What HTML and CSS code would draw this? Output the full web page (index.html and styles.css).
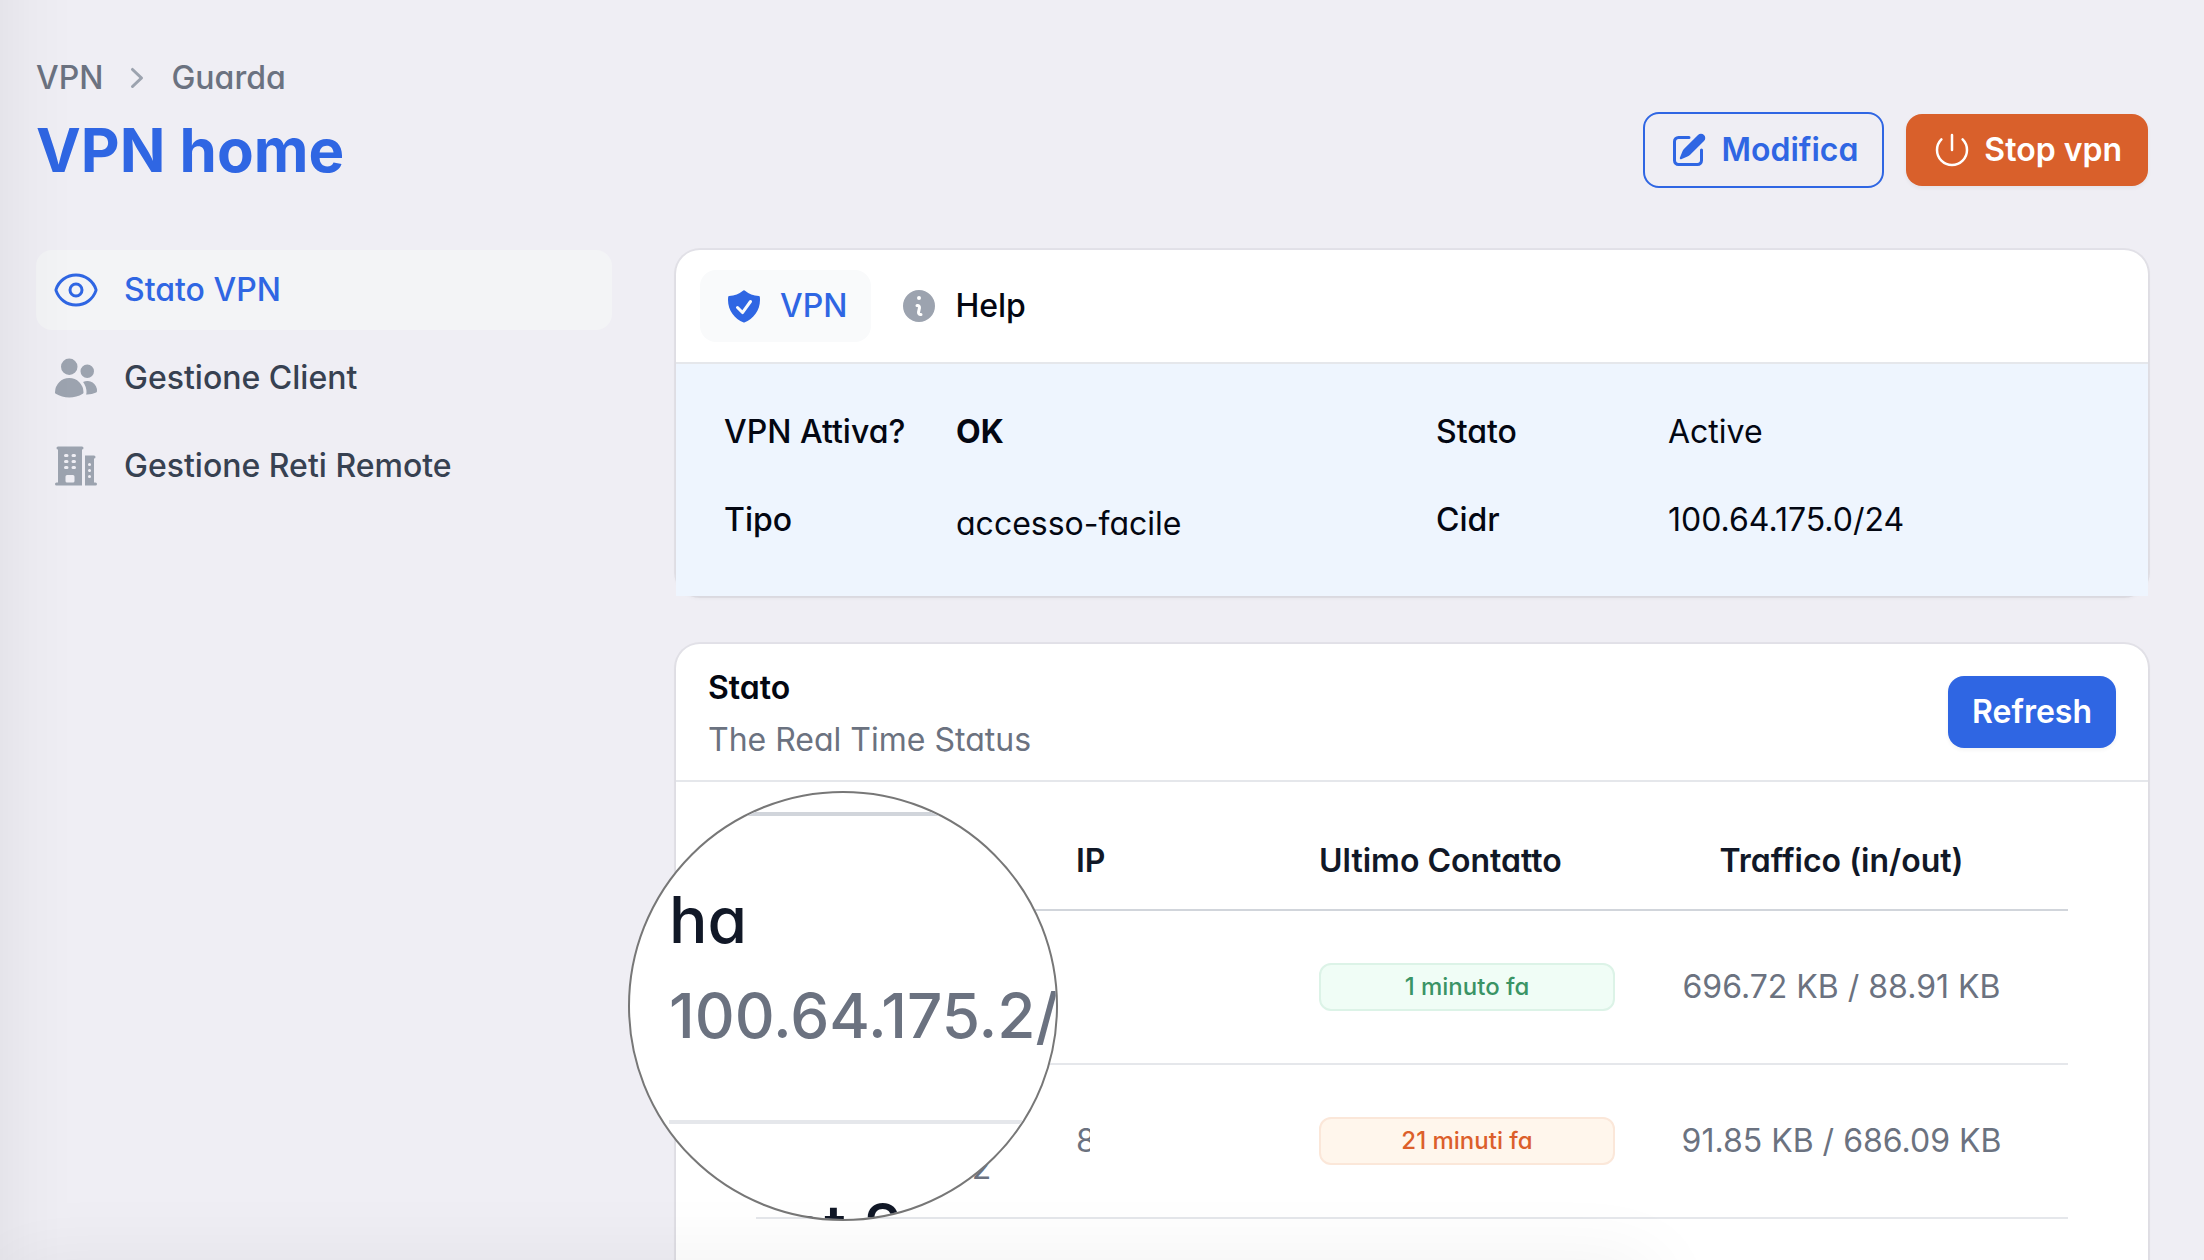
FILE: index.html
```html
<!DOCTYPE html>
<html lang="it">
<head>
<meta charset="utf-8">
<meta name="viewport" content="width=device-width, initial-scale=1">
<title>VPN home</title>
<link rel="stylesheet" href="styles.css">
</head>
<body>
<div class="page">
  <header class="page-header">
    <nav class="breadcrumb" aria-label="Breadcrumb">
      <a href="#vpn">VPN</a>
      <svg class="icon" viewBox="0 0 20 20" fill="currentColor" aria-hidden="true"><path fill-rule="evenodd" d="M7.21 14.77a.75.75 0 01.02-1.06L11.168 10 7.23 6.29a.75.75 0 111.04-1.08l4.5 4.25a.75.75 0 010 1.08l-4.5 4.25a.75.75 0 01-1.06-.02z"/></svg>
      <a href="#guarda">Guarda</a>
    </nav>
    <div class="title-row">
      <h1>VPN home</h1>
      <div class="actions">
        <button type="button" class="btn btn-outline">
          <svg class="icon" viewBox="0 0 20 20" fill="currentColor" aria-hidden="true"><path d="M5.433 13.917l1.262-3.155A4 4 0 017.58 9.42l6.92-6.918a2.121 2.121 0 013 3l-6.92 6.918c-.383.383-.84.685-1.343.886l-3.154 1.262a.5.5 0 01-.65-.65z"/><path d="M3.5 5.75c0-.69.56-1.25 1.25-1.25H10A.75.75 0 0010 3H4.75A2.75 2.75 0 002 5.75v9.5A2.75 2.75 0 004.75 18h9.5A2.75 2.75 0 0017 15.25V10a.75.75 0 00-1.5 0v5.25c0 .69-.56 1.25-1.25 1.25h-9.5c-.69 0-1.25-.56-1.25-1.25v-9.5z"/></svg>
          <span>Modifica</span>
        </button>
        <button type="button" class="btn btn-danger">
          <svg class="icon" viewBox="0 0 24 24" fill="none" stroke="currentColor" stroke-width="1.5" stroke-linecap="round" stroke-linejoin="round" aria-hidden="true"><path d="M5.636 5.636a9 9 0 1012.728 0M12 3v9"/></svg>
          <span>Stop vpn</span>
        </button>
      </div>
    </div>
  </header>

  <div class="layout">
    <nav class="sidebar" aria-label="Sezioni">
      <a class="side-link is-active" href="#stato">
        <svg class="icon-lg" viewBox="0 0 24 24" fill="none" stroke="currentColor" stroke-width="1.5" stroke-linecap="round" stroke-linejoin="round" aria-hidden="true"><path d="M2.036 12.322a1.012 1.012 0 010-.639C3.423 7.51 7.36 4.5 12 4.5c4.638 0 8.573 3.007 9.963 7.178.07.207.07.431 0 .639C20.577 16.49 16.64 19.5 12 19.5c-4.638 0-8.573-3.007-9.963-7.178z"/><path d="M15 12a3 3 0 11-6 0 3 3 0 016 0z"/></svg>
        <span>Stato VPN</span>
      </a>
      <a class="side-link" href="#client">
        <svg class="icon-lg" viewBox="0 0 24 24" fill="currentColor" aria-hidden="true"><path d="M4.5 6.375a4.125 4.125 0 118.25 0 4.125 4.125 0 01-8.25 0zM14.25 8.625a3.375 3.375 0 116.75 0 3.375 3.375 0 01-6.75 0zM1.5 19.125a7.125 7.125 0 0114.25 0v.003l-.001.119a.75.75 0 01-.363.63 13.067 13.067 0 01-6.761 1.873c-2.472 0-4.786-.684-6.76-1.873a.75.75 0 01-.364-.63l-.001-.122zM17.25 19.128l-.001.144a2.25 2.25 0 01-.233.96 10.088 10.088 0 005.06-1.01.75.75 0 00.42-.643 4.875 4.875 0 00-6.957-4.611 8.586 8.586 0 011.71 5.157v.003z"/></svg>
        <span>Gestione Client</span>
      </a>
      <a class="side-link" href="#reti">
        <svg class="icon-lg" viewBox="0 0 24 24" fill="currentColor" aria-hidden="true"><path fill-rule="evenodd" d="M3 2.25a.75.75 0 000 1.5v16.5h-.75a.75.75 0 000 1.5H15v-18a.75.75 0 000-1.5H3zM6.75 19.5v-2.25a.75.75 0 01.75-.75h3a.75.75 0 01.75.75v2.25a.75.75 0 01-.75.75h-3a.75.75 0 01-.75-.75zM6 6.75A.75.75 0 016.75 6h.75a.75.75 0 010 1.5h-.75A.75.75 0 016 6.75zM6.75 9a.75.75 0 000 1.5h.75a.75.75 0 000-1.5h-.75zM6 12.75a.75.75 0 01.75-.75h.75a.75.75 0 010 1.5h-.75a.75.75 0 01-.75-.75zM10.5 6a.75.75 0 000 1.5h.75a.75.75 0 000-1.5h-.75zm-.75 3.75A.75.75 0 0110.5 9h.75a.75.75 0 010 1.5h-.75a.75.75 0 01-.75-.75zM10.5 12a.75.75 0 000 1.5h.75a.75.75 0 000-1.5h-.75zM16.5 6.75v15h5.25a.75.75 0 000-1.5H21v-12a.75.75 0 000-1.5h-4.5zm1.5 4.5a.75.75 0 01.75-.75h.008a.75.75 0 01.75.75v.008a.75.75 0 01-.75.75h-.008a.75.75 0 01-.75-.75v-.008zm.75 2.25a.75.75 0 00-.75.75v.008c0 .414.336.75.75.75h.008a.75.75 0 00.75-.75v-.008a.75.75 0 00-.75-.75h-.008zM18 17.25a.75.75 0 01.75-.75h.008a.75.75 0 01.75.75v.008a.75.75 0 01-.75.75h-.008a.75.75 0 01-.75-.75v-.008z"/></svg>
        <span>Gestione Reti Remote</span>
      </a>
    </nav>

    <main class="content">
      <section class="card">
        <div class="tabs">
          <button type="button" class="tab is-active">
            <svg class="icon" viewBox="0 0 20 20" fill="currentColor" aria-hidden="true"><path fill-rule="evenodd" d="M9.661 2.237a.531.531 0 01.678 0 11.947 11.947 0 007.078 2.749.5.5 0 01.479.425c.069.52.104 1.05.104 1.589 0 5.162-3.26 9.563-7.834 11.256a.48.48 0 01-.332 0C5.26 16.563 2 12.162 2 7c0-.538.035-1.069.104-1.589a.5.5 0 01.48-.425 11.947 11.947 0 007.077-2.75zm4.196 5.954a.75.75 0 00-1.214-.882l-3.483 4.79-1.88-1.88a.75.75 0 10-1.06 1.061l2.5 2.5a.75.75 0 001.137-.089l4-5.5z"/></svg>
            <span>VPN</span>
          </button>
          <button type="button" class="tab">
            <svg class="icon" viewBox="0 0 20 20" fill="currentColor" aria-hidden="true"><path fill-rule="evenodd" d="M18 10a8 8 0 11-16 0 8 8 0 0116 0zm-7-4a1 1 0 11-2 0 1 1 0 012 0zM9 9a.75.75 0 000 1.5h.253a.25.25 0 01.244.304l-.459 2.066A1.75 1.75 0 0010.747 15H11a.75.75 0 000-1.5h-.253a.25.25 0 01-.244-.304l.459-2.066A1.75 1.75 0 009.253 9H9z"/></svg>
            <span>Help</span>
          </button>
        </div>
        <dl class="details">
          <div class="detail"><dt>VPN Attiva?</dt><dd class="strong">OK</dd></div>
          <div class="detail"><dt>Stato</dt><dd>Active</dd></div>
          <div class="detail"><dt>Tipo</dt><dd class="lowered">accesso-facile</dd></div>
          <div class="detail"><dt>Cidr</dt><dd>100.64.175.0/24</dd></div>
        </dl>
      </section>

      <section class="card">
        <div class="card-header">
          <div class="card-heading">
            <h2>Stato</h2>
            <p>The Real Time Status</p>
          </div>
          <button type="button" class="btn btn-primary">Refresh</button>
        </div>
        <div class="table-wrap">
          <table>
            <thead>
              <tr>
                <th class="col-name"></th>
                <th class="col-ip">IP</th>
                <th class="col-contact">Ultimo Contatto</th>
                <th class="col-traffic">Traffico (in/out)</th>
              </tr>
            </thead>
            <tbody>
              <tr>
                <td></td>
                <td></td>
                <td><span class="badge badge-green">1 minuto fa</span></td>
                <td class="col-traffic">696.72 KB / 88.91 KB</td>
              </tr>
              <tr>
                <td class="client"><div class="name">Client 2</div><div>100.64.175.3/32</div></td>
                <td><span class="masked">8</span></td>
                <td><span class="badge badge-orange">21 minuti fa</span></td>
                <td class="col-traffic">91.85 KB / 686.09 KB</td>
              </tr>
              <tr>
                <td class="client"><div class="name">Client t</div><div>100.64.175.4/32</div></td>
                <td></td>
                <td></td>
                <td></td>
              </tr>
            </tbody>
          </table>
          <div class="lens">
            <div class="lens-row"><div class="name">ha</div><div class="lens-ip">100.64.175.2/32</div></div>
            <div class="lens-row"><div class="name">Client 2</div></div>
          </div>
        </div>
      </section>
    </main>
  </div>
</div>
</body>
</html>
```
FILE: styles.css
```css
* {
  box-sizing: border-box;
  margin: 0;
  padding: 0;
}

body {
  height: 100vh;
  overflow: hidden;
  background: #efeef4;
  color: #030712;
  font-family: Inter, "Open Sans", sans-serif;
  font-feature-settings: "cv11";
  font-size: 32px;
  line-height: 48px;
}

/* soft shade along the left and bottom window edges */
body::after {
  content: "";
  position: fixed;
  inset: 0;
  pointer-events: none;
  background: linear-gradient(to right, rgba(0, 0, 0, 0.04), rgba(0, 0, 0, 0.015) 32px, transparent 72px);
}

body::before {
  content: "";
  position: fixed;
  z-index: 1;
  top: 100%;
  left: 0;
  width: 75%;
  height: 80px;
  box-shadow: 0 0 80px rgba(0, 0, 0, 0.06);
}

a {
  color: inherit;
  text-decoration: none;
}

button {
  border: 0;
  background: none;
  color: inherit;
  font: inherit;
  font-feature-settings: inherit;
  cursor: pointer;
}

.icon {
  flex: none;
  width: 40px;
  height: 40px;
}

.icon-lg {
  flex: none;
  width: 48px;
  height: 48px;
}

.page {
  padding: 54px 56px 0 36px;
}

.breadcrumb {
  display: flex;
  align-items: center;
  gap: 14px;
  color: #6b7280;
  font-weight: 500;
}

.breadcrumb .icon {
  color: #9ca3af;
}

.title-row {
  display: flex;
  align-items: center;
  justify-content: space-between;
  margin-top: 10px;
  height: 76px;
}

h1 {
  color: #2f66e3;
  font-size: 60px;
  font-weight: 700;
  line-height: 72px;
}

.actions {
  display: flex;
  align-items: center;
  gap: 22px;
}

.btn {
  display: flex;
  align-items: center;
  gap: 12px;
  padding: 12px 24px;
  border-radius: 16px;
  font-weight: 600;
}

.btn-outline {
  border: 2px solid #2f66e3;
  color: #2f66e3;
}

.btn-danger {
  padding: 12px 26px;
  background: #d9602b;
  color: #fff;
  box-shadow: 0 2px 4px rgba(0, 0, 0, 0.05);
}

.btn-primary {
  background: #2f66e3;
  color: #fff;
  box-shadow: 0 2px 4px rgba(0, 0, 0, 0.05);
}

.layout {
  display: grid;
  grid-template-columns: minmax(0, 9fr) minmax(0, 23fr);
  gap: 64px;
  margin-top: 62px;
}

.sidebar {
  display: flex;
  flex-direction: column;
  gap: 8px;
}

.side-link {
  display: flex;
  align-items: center;
  gap: 24px;
  padding: 16px;
  border-radius: 16px;
  color: #374151;
  font-weight: 500;
}

.side-link svg {
  color: #9ca3af;
}

.side-link.is-active {
  background: #f3f4f6;
}

.side-link.is-active,
.side-link.is-active svg {
  color: #2f66e3;
}

.content {
  display: flex;
  flex-direction: column;
  gap: 48px;
}

.card {
  border-radius: 24px;
  background: #fff;
  box-shadow: 0 0 0 2px rgba(3, 7, 18, 0.05), 0 2px 4px rgba(0, 0, 0, 0.05);
}

.tabs {
  display: flex;
  gap: 4px;
  padding: 20px 24px;
  border-bottom: 2px solid #e5e7eb;
}

.tab {
  display: flex;
  align-items: center;
  gap: 16px;
  padding: 12px 24px;
  border-radius: 16px;
  font-weight: 500;
}

.tab svg {
  color: #9ca3af;
}

.tab.is-active {
  background: #f9fafb;
}

.tab.is-active,
.tab.is-active svg {
  color: #2f66e3;
}

.details {
  display: grid;
  grid-template-columns: 1fr 1fr;
  gap: 40px 48px;
  padding: 44px 48px 52px;
  background: #eef5fe;
}

.detail {
  display: grid;
  grid-template-columns: 1fr 2fr;
  gap: 16px;
  height: 48px;
}

dt {
  font-weight: 500;
  white-space: nowrap;
}

.strong {
  font-weight: 700;
}

.lowered {
  padding-top: 4px;
}

.card-header {
  display: flex;
  align-items: center;
  justify-content: space-between;
  padding: 16px 32px;
  border-bottom: 2px solid #e5e7eb;
}

.card-heading {
  padding-top: 4px;
}

h2 {
  font-size: 32px;
  font-weight: 600;
  line-height: 48px;
}

.card-heading p {
  margin-top: 4px;
  color: #6b7280;
}

.table-wrap {
  position: relative;
  padding: 55px 80px 0;
}

table {
  width: 100%;
  table-layout: fixed;
  border-collapse: collapse;
  color: #6b7280;
}

th {
  padding-bottom: 24px;
  border-bottom: 2px solid #d1d5db;
  color: #111827;
  font-weight: 600;
  text-align: left;
  white-space: nowrap;
}

td {
  height: 154px;
  border-bottom: 2px solid #e5e7eb;
  vertical-align: middle;
  white-space: nowrap;
}

.client {
  padding-top: 6px;
}

.name {
  color: #111827;
  font-weight: 500;
}

.col-name {
  width: 320px;
}

.col-ip {
  width: 243px;
}

.col-contact {
  width: 296px;
}

.col-traffic {
  text-align: center;
}

.badge {
  display: block;
  padding: 6px;
  border: 2px solid;
  border-radius: 12px;
  font-size: 24px;
  font-weight: 500;
  line-height: 32px;
  text-align: center;
}

.badge-green {
  border-color: #dcf3e7;
  background: #f0fdf6;
  color: #3a9465;
}

.badge-orange {
  border-color: #fbe7d9;
  background: #fff6ec;
  color: #dc5f2b;
}

.masked {
  display: block;
  width: 14px;
  overflow: hidden;
}

/* magnifier floating over the first column */
.lens {
  position: absolute;
  top: 9px;
  left: -48px;
  width: 430px;
  height: 430px;
  padding: 19px 0 0 39px;
  overflow: hidden;
  border: 2px solid #777;
  border-radius: 50%;
  background: #fff;
  font-size: 64px;
  line-height: 96px;
}

.lens-row {
  height: 308px;
  padding-top: 56px;
  border-top: 4px solid #d1d5db;
}

.lens-row + .lens-row {
  border-top-color: #e5e7eb;
}

.lens-ip {
  color: #6b7280;
  font-size: 62px;
  font-weight: 500;
}
```
